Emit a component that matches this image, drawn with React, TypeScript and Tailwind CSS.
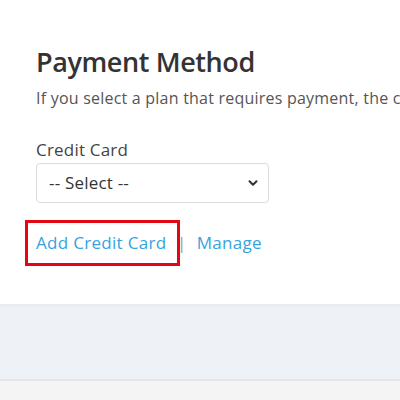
import { ChevronDown } from "lucide-react";

const App = () => {
  return (
    <div className="w-[400px] h-[400px] overflow-hidden bg-[#f4f4f4] font-['Open_Sans',sans-serif]">
      <section className="bg-white h-[304px] shadow-[0_1px_3px_rgba(0,0,0,0.06)] pt-[44px] pl-9 whitespace-nowrap overflow-hidden">
        <h2 className="text-[27px] leading-9 font-semibold text-[#333] tracking-[-0.4px]">Payment Method</h2>
        <p className="mt-[8px] text-[16px] leading-5 text-[#555] tracking-[0.22px]">
          If you select a plan that requires payment, the card will be charged.
        </p>

        <div className="mt-[32px]">
          <label className="block text-[17px] leading-5 text-[#444] tracking-[0.2px]">Credit Card</label>
          <div className="mt-[3px] w-[233px] h-[40px] border border-[#dcdcdc] rounded-[4px] flex items-center justify-between pl-3 pr-2">
            <span className="text-[17px] text-[#333] tracking-[0.2px]">-- Select --</span>
            <ChevronDown size={14} strokeWidth={3.5} className="text-[#333]" />
          </div>
        </div>

        <div className="mt-[17px] -ml-[11px] flex items-center text-[17px] text-[#36a3e0] tracking-[0.3px]">
          <div className="border-[3px] border-[#e30613] h-[46px] w-[155px] flex items-center pl-[8px]">
            Add Credit Card
          </div>
          <span className="-ml-[3px] text-[#999]">|</span>
          <a className="ml-[10px]">Manage</a>
        </div>
      </section>
      <div className="h-[75px] bg-[#eef1f6] shadow-[inset_0_3px_4px_-2px_rgba(0,0,0,0.05)]" />
      <div className="h-[2px] bg-[#e4e3e8]" />
    </div>
  );
};

export default App;
